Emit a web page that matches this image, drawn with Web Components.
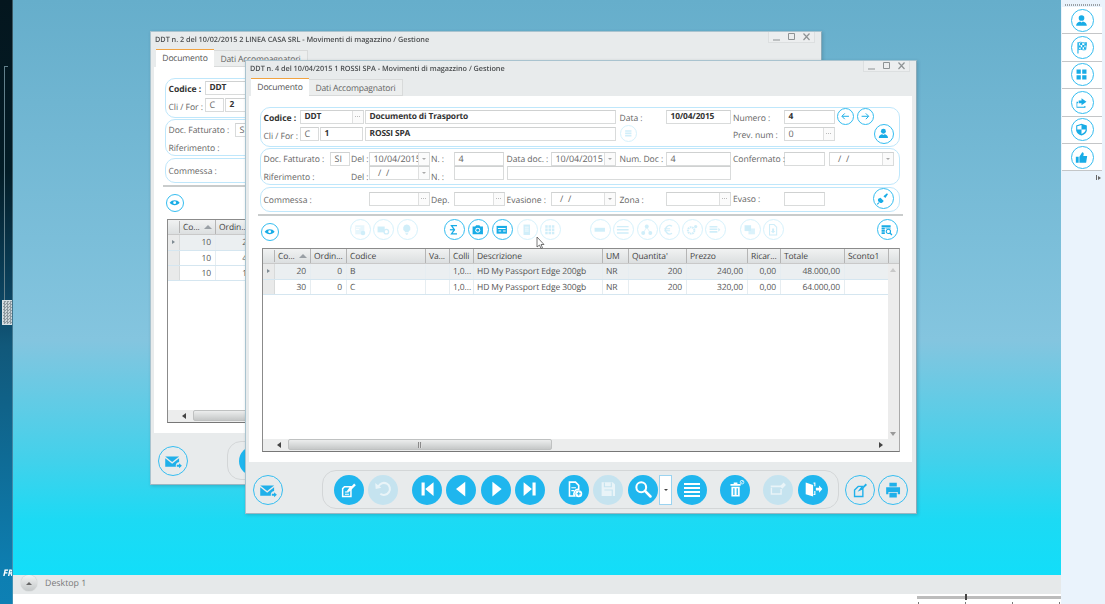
<!DOCTYPE html>
<html lang="it"><head><meta charset="utf-8"><title>DDT</title>
<style>html,body{margin:0;padding:0;height:604px;overflow:hidden;background:#fff}</style></head>
<body><app-desktop></app-desktop>
<script>
const FONT='"Open Sans","Noto Sans",sans-serif';
const P={
first:'<path d="M6 5h3.4v14H6zM19 4.500v15L10 12z"/>',
prev:'<path d="M16.500 4v16L6.500 12z"/>',
next:'<path d="M8 4v16l10-8z"/>',
last:'<path d="M5 4.500v15l9-7.500zM14.600 5H18v14h-3.400z"/>',
list:'<path d="M4 5h16v2H4zM4 9h16v2H4zM4 13h16v2H4zM4 17h16v2H4z"/>',
search:'<circle cx="10" cy="10" r="5.300" fill="none" stroke="currentColor" stroke-width="2.200"/><path d="M14 14l6 6" stroke="currentColor" stroke-width="2.800" stroke-linecap="round"/>',
undo:'<path d="M7 9a6.500 6.500 0 1 1 2 8" fill="none" stroke="currentColor" stroke-width="2.200"/><path d="M3.500 5.500l.5 6.500 6-1.500z"/>',
trash:'<path d="M7 6.500h11V8.500H7zM10.500 5h4v1.500h-4zM8 9.500h9V20H8z"/><path d="M10.700 11v7.500M14.300 11v7.500" stroke="var(--bg,#1fb6ee)" stroke-width="1.300"/><circle cx="19.500" cy="4.500" r="2" fill="none" stroke="currentColor" stroke-width=".8"/><path d="M18.200 5.800l2.600-2.600" stroke="currentColor" stroke-width=".7"/>',
save:'<path d="M5 4.500h12l2.500 2.500v12.500H5z"/><path d="M8 5v4.500h7.500V5M8 13h8.500v6.500" fill="none" stroke="var(--bg,#c5e3ef)" stroke-width="1.200"/>',
edit:'<path d="M7 9.500h7l0 0-3 4 3-1v7.500H5V11.500z" fill="none" stroke="currentColor" stroke-width="1.600"/><path d="M7.500 14.500h4v1.200h-4zM7.500 17h4.500v1.200h-4.500z"/><path d="M11 13l6.500-7 1.800 1.800-6.800 6.800-2.200.6z"/>',
newdoc:'<path d="M7 4.500h6.500l3.500 3.500v4a5 5 0 0 0-4.500 7.500H7z" fill="none" stroke="currentColor" stroke-width="1.700"/><path d="M9 10h5v1.200H9zM9 13h3v1.200H9z"/><circle cx="17" cy="17" r="3.800"/><path d="M15 17h4M17 15v4" stroke="var(--bg,#1fb6ee)" stroke-width="1.200"/>',
win:'<path d="M4 8h12v2H4zM4 10.500h1.500V18H4zM16 12v6H4v-1.500h10.500V12z"/><path d="M14 9l4-4 2.500 2.500-4 4z"/>',
exit:'<path d="M4 5l8 2.500v12.500l-8-2.500zM12.500 5h2v4h-1.200V6.200h-.8zM13.300 14h1.200v4.500h-2v-1.200h.8z"/><path d="M15 10.500h3.500V8l3.500 4-3.500 4v-2.500H15z"/>',
mail:'<path d="M3.500 7h15l-7.500 6zM3.500 8.800l7.500 6 7.500-6V13a4 4 0 0 0-3.500 5H3.500z"/><path d="M16 16h2.500v-1.800l3 2.800-3 2.800V18H16z"/>',
newout:'<path d="M10 8h4.500l-3 4 3.500-1.500V19H6V12z" fill="none" stroke="currentColor" stroke-width="1.500"/><path d="M13 10.500l5-5.500 1.500 1.500-5.500 5z"/>',
print:'<path d="M8 4h8v4H8zM4.500 9h15v7.500H17V14H7v2.500H4.500zM8 15h8v5H8z"/>',
eye:'<path d="M3 12c4-6 14-6 18 0-4 6-14 6-18 0z"/><circle cx="12" cy="12" r="2.600" fill="#fff"/>',
sigma:'<path d="M17 5.500H8.500l4.500 6.500-4.500 6.500H17" fill="none" stroke="currentColor" stroke-width="2"/><path d="M6 12h7.500" stroke="currentColor" stroke-width="2"/>',
camera:'<path d="M4 7h4l1.500-2h5L16 7h4v12H4z"/><circle cx="12" cy="12.700" r="3.800" fill="#fff"/><circle cx="12" cy="12.700" r="2.300"/>',
card:'<path d="M4 6h16v12H4z"/><path d="M6 10h12M7 14h4M14 14h4" stroke="#fff" stroke-width="1.700"/>',
grid9:'<path d="M5 5h3.800v3.800H5zM10.100 5h3.800v3.800h-3.800zM15.200 5H19v3.800h-3.800zM5 10.100h3.800v3.800H5zM10.100 10.100h3.800v3.800h-3.800zM15.200 10.100H19v3.800h-3.800zM5 15.200h3.800V19H5zM10.100 15.200h3.800V19h-3.800zM15.200 15.200H19V19h-3.800z"/>',
doca:'<path d="M5 5h14v14H5z" opacity=".5"/><path d="M6 8h7v1.500H6zM6 11h5v1.500H6z" fill="#fff"/><circle cx="17" cy="17" r="3.500"/>',
docb:'<path d="M4 7h11v9H4z"/><circle cx="17.500" cy="15" r="3.500" fill="none" stroke="currentColor" stroke-width="2"/>',
bulb:'<path d="M12 4a5.500 5.500 0 0 0-3 10.200V16h6v-1.800A5.500 5.500 0 0 0 12 4zM10 17h4v1.300h-4zM10.700 19h2.600v1h-2.600z"/>',
doc3:'<path d="M7 4h10v16H7z"/><path d="M9 8h6M9 11h6M9 14h6" stroke="#fff" stroke-width="1.200"/>',
minus:'<path d="M4 9h16v6H4z"/>',
bars:'<path d="M3 6h18v2H3zM3 11h18v2H3zM3 16h18v2H3z"/>',
tree:'<circle cx="12" cy="7" r="3"/><circle cx="6.500" cy="17" r="3"/><circle cx="17.500" cy="17" r="3"/><path d="M12 8l-5.500 9M12 8l5.500 9" stroke="currentColor"/>',
euro:'<path d="M17 6.500a6.500 6.500 0 1 0 0 11" fill="none" stroke="currentColor" stroke-width="2"/><path d="M5 10.500h9M5 13.500h9" stroke="currentColor" stroke-width="1.500"/>',
gear:'<circle cx="11" cy="13" r="5" fill="none" stroke="currentColor" stroke-width="3" stroke-dasharray="2.500 1"/><circle cx="18" cy="7" r="2.500"/>',
rows:'<path d="M4 6h12v2.500H4zM4 10h12v2.500H4zM4 14h12v2.500H4z"/><path d="M17.500 9l3 3-3 3z"/>',
copy:'<path d="M4 5h10v9H4z"/><path d="M10 10h10v9H10z" opacity=".75"/>',
docdn:'<path d="M7 4h7l4 4v12H7z" fill="none" stroke="currentColor" stroke-width="1.600"/><path d="M11 10h3v4h2l-3.500 3.500L9 14h2z"/>',
dbsearch:'<path d="M4 5h14v3H4zM4 9h5v2.500H4zM4 12.500h5V15H4zM4 16h5v2.500H4zM10 9h8v1H10z"/><circle cx="14.500" cy="14.500" r="3.300" fill="none" stroke="currentColor" stroke-width="1.700"/><path d="M17 17l3 3" stroke="currentColor" stroke-width="2"/>',
left:'<path d="M19 12H6M11 6.500L5.500 12l5.500 5.500" fill="none" stroke="currentColor" stroke-width="1.900"/>',
right:'<path d="M5 12h13M13 6.500l5.500 5.500-5.500 5.500" fill="none" stroke="currentColor" stroke-width="1.900"/>',
user:'<circle cx="12" cy="8.500" r="4"/><path d="M4.500 19.500c0-4 3.500-5.500 5.500-6l2 1.200 2-1.200c2 .5 5.500 2 5.500 6z"/>',
plug:'<path d="M13 8l3 3 4-6-1.500-1.500zM8.500 10.500l5 5-2.500 2.500c-2 1-3.500.5-5-1s-2-3-1-5z"/><path d="M6 18l-2.500 2.500" stroke="currentColor" stroke-width="1.600"/>',
flag:'<path d="M7 4.500v16" stroke="currentColor" stroke-width="1.500"/><path d="M8 5c4-1.500 6 1.500 11 0l-1 10c-4 1.500-6-1.500-10 0z" fill="none" stroke="currentColor" stroke-width="1.200"/><path d="M10 5.500h3v3h-3zM16 6h3v3h-3zM13 8.500h3v3h-3zM8.500 9h2.500v3H8.500zM11 11.500h2.500v3H11zM15.500 11.500h2.500v3h-2.500z"/>',
tiles:'<path d="M5 5h6v6H5zM13 5h6v6h-6zM5 13h6v6H5zM13 13h6v6h-6z"/>',
share:'<path d="M12 6l7 5-7 5v-3H8V9h4z"/><path d="M5 11h2v2H6v5h10v-1h1.500v2.500H5z"/>',
shield:'<path d="M12 4l7.500 2.500V13c0 3.500-3.500 6-7.500 7.500C8 19 4.500 16.500 4.500 13V6.500z"/><path d="M12 5.500V12H6V7.500zM12 12h6c-.3 3-3 5-6 6.500z" fill="#fff"/>',
thumb:'<path d="M4 11h4v8.500H4zM9 11l4-6.500c1.800 0 2.500 1.500 2 3.500l-.5 2H20l-1.500 9.500H9z"/>',
stack:'<path d="M6 6h12v3H6zM6 10.500h12v3H6zM6 15h12v3H6z"/>'
};
class XIco extends HTMLElement{connectedCallback(){
 const d=+this.getAttribute('d')||21,n=this.getAttribute('n');
 const s=this.getAttribute('s')||.74;
 const r=this.attachShadow({mode:'open'});
 r.innerHTML=`<style>
 :host{display:inline-flex;flex:none;align-items:center;justify-content:center;box-sizing:border-box;width:${d}px;height:${d}px;border-radius:50%}
 :host([v=out]){border:1.500px solid #35bdf0;color:#18ace6;background:#fff}
 :host([v=ghost]){border:1.500px solid #35bdf0;color:#18ace6;background:#fff;opacity:.2}
 :host([v=clear]){border:1.300px solid #35bdf0;color:#1fb0ea;background:transparent}
 :host([v=fill]){background:#1fb6ee;color:#fff;--bg:#1fb6ee}
 :host([v=off]){background:#c5e3ef;color:#e9f4f8;--bg:#c5e3ef}
 svg{width:${d*s}px;height:${d*s}px;display:block;fill:currentColor}
 </style><svg viewBox="0 0 24 24">${P[n]||''}</svg>`;
}}
customElements.define('x-ico',XIco);

class XField extends HTMLElement{connectedCallback(){
 const b=this.getAttribute('btn');
 this.attachShadow({mode:'open'}).innerHTML=`<style>
 :host{display:inline-flex;flex:none;box-sizing:border-box;height:100%;border:1px solid #d9dbdb;border-top-color:#cfd1d1;background:#fff;color:#666;font-size:9px;line-height:12px;overflow:hidden}
 :host([b]){color:#333;font-weight:700;font-size:8.400px;letter-spacing:-.15px}
 .t{flex:1;padding:1px 0 0 4px;white-space:nowrap;overflow:hidden;align-self:center}
 .btn{flex:none;width:10px;border-left:1px solid #dfe0e0;display:flex;align-items:center;justify-content:center;color:#aaa;font-size:7px;background:#fbfbfb}
 i{display:block;width:0;height:0;border:2px solid transparent;border-top:2.500px solid #aaa;border-bottom:0}
 </style><span class="t"><slot></slot></span>${b?`<span class="btn">${b=='drop'?'<i></i>':'<svg width="6" height="2" viewBox="0 0 6 2" fill="#bbb"><path d="M0 0h1v1H0zM2 0h1v1H2zM4 0h1v1H4z"/></svg>'}</span>`:''}`;
}}
customElements.define('x-field',XField);

class XGroup extends HTMLElement{connectedCallback(){
 this.attachShadow({mode:'open'}).innerHTML=`<style>
 :host{display:flex;flex-direction:column;box-sizing:border-box;border:1.500px solid #bfe7fb;border-radius:10px;background:#fff;margin-left:11px;width:640px}
 </style><slot></slot>`;
}}
customElements.define('x-group',XGroup);

class XRow extends HTMLElement{connectedCallback(){
 this.attachShadow({mode:'open'}).innerHTML=`<style>
 :host{display:flex;align-items:center;flex:none;color:#666;font-size:8.600px;letter-spacing:-.05px}
 </style><slot></slot>`;
}}
customElements.define('x-row',XRow);

/* builds a flowing row from x positions: each item's margin comes from the previous item's end.
   limit: items starting at or past it are covered by another window, so they carry no text. */
function row(h,top,items,limit=1e9,org=261.5){
 let cur=org,html='';
 for(const it of items){
  const [k,x,w,t,o]=it; const m=(x-cur).toFixed(1); cur=x+w;
  const txt=x>=limit&&k!='i'?'':t;
  if(k=='l') html+=`<span style="margin-left:${m}px;width:${w}px;flex:none;white-space:nowrap;position:relative;top:${((o&&o.dy)||0)+.5}px;${o&&o.b?'font-weight:700;color:#333':''}">${txt}</span>`;
  else if(k=='f'){const a=o||{};html+=`<x-field style="margin-left:${m}px;width:${w}px" ${a.b?'b':''} ${a.btn?`btn="${a.btn}"`:''}>${txt||''}</x-field>`;}
  else if(k=='i'){html+=`<x-ico style="margin-left:${m}px" n="${txt}" d="${w}" v="${(o&&o.v)||'out'}"></x-ico>`;}
 }
 return `<x-row style="height:${h}px;margin-top:${top}px">${html}</x-row>`;
}

class IconBar extends HTMLElement{connectedCallback(){
 const items=JSON.parse(this.getAttribute('items'));const org=+this.getAttribute('org');
 let cur=org,h='';
 for(const [c,d,n,v,s,dy] of items){h+=`<x-ico style="margin-left:${(c-d/2-cur).toFixed(1)}px;${dy?`margin-top:${dy}px`:''}" n="${n}" d="${d}" v="${v}" ${s?`s="${s}"`:''}></x-ico>`;cur=c+d/2;}
 this.attachShadow({mode:'open'}).innerHTML=`<style>:host{display:flex;align-items:center;flex:none}</style>${h}`;
}}
customElements.define('icon-bar',IconBar);

class DocGrid extends HTMLElement{connectedCallback(){
 const rows=JSON.parse(this.getAttribute('rows'));
 const vis=+this.getAttribute('vis')||12;
 const W=[36,36,79,24,24,129,26,58,61,33,64,44];
 const H=['Co...','Ordin...','Codice','Va...','Colli','Descrizione','UM',"Quantita'",'Prezzo','Ricar...','Totale','Sconto1'];
 const A=[1,1,0,0,0,0,0,1,1,1,1,0];
 const head=H.map((t,i)=>`<div class="hc" style="width:${W[i]}px">${i<vis?t:''}${i==0?'<b class="sort"></b>':''}</div>`).join('');
 const body=rows.map((r,ri)=>`<div class="r ${ri==0?'sel':''}" style="height:${ri==0?16:15}px"><div class="rs">${ri==0?'<b class="tri"></b>':''}</div>${W.map((w,i)=>`<div class="c ${A[i]?'ra':''}" style="width:${w}px">${r[i]||''}</div>`).join('')}</div>`).join('');
 this.attachShadow({mode:'open'}).innerHTML=`<style>
 :host{display:flex;flex-direction:column;box-sizing:border-box;flex:none;margin:5px 0 0 13px;width:638px;height:204px;border:1px solid #8b8b8b;border-bottom-color:#777;border-right-color:#aaa;background:#fff;font-size:8.500px;letter-spacing:-.1px;color:#555}
 .h{display:flex;height:15px;box-sizing:border-box;flex:none;background:linear-gradient(#f1f2f2,#dcdfe0);border-bottom:1px solid #c9c9c9}
 .hs{width:11px;flex:none;border-right:1px solid #b5b5b5;margin:1px 0}
 .hc{flex:none;box-sizing:border-box;padding:0 3px;line-height:15px;white-space:nowrap;color:#444;border-right:1px solid #b5b5b5;position:relative}
 .sort{position:absolute;right:3px;top:5px;border:4px solid transparent;border-bottom:4px solid #9aa0a5;border-top:0}
 .mid{flex:1;display:grid;grid-template-columns:1fr 11px;grid-template-rows:1fr 12px;min-height:0}
 .v{background:#ececec;position:relative}
 .vw{display:flex;flex-direction:column;min-width:0;overflow:hidden}
 .r{display:flex;flex:none;border-bottom:1px solid #d5e6f0;box-sizing:border-box;background:#fff}
 .r.sel .c{background:#ebeff1}
 .rs{width:11px;flex:none;background:#e9eaea;border-right:1px solid #d8dada;display:flex;align-items:center;justify-content:center}
 .tri{border:2.500px solid transparent;border-left:3px solid #7f8b93;border-right:0}
 .c{flex:none;box-sizing:border-box;padding:1px 3px 0;line-height:14px;white-space:nowrap;overflow:hidden;border-right:1px solid #e6edf1}
 .ra{text-align:right;padding-right:4px}
 .arrv{display:block;position:absolute;left:2px;border:3.500px solid transparent}
 .hb{grid-column:1/3;display:flex;align-items:center;background:#eceded;position:relative}
 .ar{flex:none;border:3.500px solid transparent}
 .th{flex:none;height:11px;width:264px;margin-left:7px;background:linear-gradient(#eceded,#d9dbdb 50%,#c6c8c8);border:1px solid #bfc1c1;border-radius:2px;box-sizing:border-box;display:flex;justify-content:center;align-items:center}
 .th span{width:4px;height:6px;background:repeating-linear-gradient(90deg,#8a8a8a 0 1px,#ddd 1px 2px)}
 </style>
 <div class="h"><div class="hs"></div>${head}</div>
 <div class="mid"><div class="vw">${body}</div>
 <div class="v"><b class="arrv" style="top:4px;border-bottom:4px solid #c8c8c8;border-top:0"></b><b class="arrv" style="bottom:3px;border-top:4px solid #999;border-bottom:0"></b></div>
 <div class="hb"><b class="ar" style="margin-left:14px;border-right:4px solid #444;border-left:0"></b><div class="th"><span></span></div><b class="ar" style="margin-left:327px;border-left:4px solid #444;border-right:0"></b></div></div>`;
}}
customElements.define('doc-grid',DocGrid);

class DocWindow extends HTMLElement{connectedCallback(){
 const g=n=>this.getAttribute(n)||'';
 const L=+this.getAttribute('limit')||1e9;
 const fill='fill',ghost='ghost',out='out',clear='clear',off='off';
 const dt='&nbsp;&nbsp;/ &nbsp;/';
 const g1=row(14,1.5,[['l',264,36,'Codice :',{b:1,dy:.5}],['f',300,64,'DDT',{b:1,btn:'dots'}],['f',365,251,'Documento di Trasporto',{b:1}],['l',620,46,'Data :',{dy:.5}],['f',666,65,g('data'),{b:1}],['l',733.5,50.5,'Numero :',{dy:.5}],['f',784,51,g('num'),{b:1}],['i',837,17,'left',{v:out}],['i',857,17,'right',{v:out}]],L)
  +row(14,3,[['l',264,36,'Cli / For :',{dy:1.5}],['f',300,19,'C'],['f',320,43,g('cli'),{b:1}],['f',365,251,g('ragione'),{b:1}],['i',620,17,'stack',{v:ghost}],['l',733.5,50.5,'Prev. num :',{dy:.5}],['f',784,51,'0',{btn:'dots'}],['i',874,20,'user',{v:out}]],L);
 const g2=row(14,2.5,[['l',264,66,'Doc. Fatturato :'],['f',330,20,'SI'],['l',351.5,18,'Del :'],['f',369,61,g('data'),{btn:'drop'}],['l',431.5,22,'N. :'],['f',454,50,g('num')],['l',507,44,'Data doc. :'],['f',551,65,g('data'),{btn:'drop'}],['l',620,46,'Num. Doc :'],['f',666,65,g('num')],['l',733.5,50,'Confermato :'],['f',784,41,''],['f',829,65,dt,{btn:'drop'}]],L)
  +row(14.5,0,[['l',264,87,'Riferimento :',{dy:3.5}],['l',351.5,18,'Del :',{dy:3.5}],['f',369,61,dt,{btn:'drop'}],['l',431.5,22,'N. :',{dy:3.5}],['f',454,50,''],['f',507,224,'']],L);
 const g3=row(14,3.5,[['l',264,105,'Commessa :',{dy:1}],['f',369,61,'',{btn:'dots'}],['l',431.5,22,'Dep.',{dy:1}],['f',454,51,'',{btn:'dots'}],['l',507,44,'Evasione :',{dy:1}],['f',551,65,dt,{btn:'drop'}],['l',620,46,'Zona :',{dy:1}],['f',666,65,'',{btn:'dots'}],['l',733.5,50.5,'Evaso :'],['f',784,41,''],['i',873,21,'plug',{v:out}]],L);
 const tb=[[270,18,'eye',out,0,4],[360,21,'doca',ghost],[383,21,'docb',ghost],[407,21,'bulb',ghost],[454,21,'sigma',out],[478,21,'camera',out],[502,21,'card',out],[527,21,'doc3',ghost],[550,21,'grid9',ghost],[600,21,'minus',ghost],[623,21,'bars',ghost],[647,21,'tree',ghost],[669,21,'euro',ghost],[692,21,'gear',ghost],[715,21,'rows',ghost],[750,21,'copy',ghost],[773,21,'docdn',ghost],[887,21,'dbsearch',out]];
 const pill1=[[349,30,'edit',fill],[383,30,'undo',off],[427,30,'first',fill],[461,30,'prev',fill],[496,30,'next',fill],[530,30,'last',fill],[574,30,'newdoc',fill],[608,30,'save',off],[643,30,'search',fill]];
 const pill2=[[692,30,'list',fill,.8],[735,30,'trash',fill],[778,30,'win',off],[813,30,'exit',fill]];
 const q=a=>JSON.stringify(a).replace(/"/g,'&quot;').replace(/'/g,'&#39;');
 this.attachShadow({mode:'open'}).innerHTML=`<style>
 :host{display:flex;flex-direction:column;position:absolute;box-sizing:border-box;width:672px;height:454px;background:#e8ebec;border:1px solid #a9c3cf;border-right:1.500px solid #8aaab8;border-bottom:1.500px solid #9cb6c2;box-shadow:1px 1px 3px rgba(40,70,90,.25);font-family:${FONT}}
 .title{display:flex;align-items:flex-start;height:17px;flex:none}
 .title span{flex:1;margin:3px 0 0 4px;font-size:7.300px;line-height:11px;font-weight:600;letter-spacing:-.03px;color:#4a4d4f;white-space:nowrap}
 .wb{display:flex;margin-right:6px;border:1px solid #dcdfe0;border-top:0;height:10px;background:#eceeef}
 .wb svg{display:block;width:15px;height:10px;fill:none;stroke:#8d9294;stroke-width:1}
 .tabs{display:flex;align-items:flex-start;height:18px;flex:none;padding-left:5px}
 .tab{box-sizing:border-box;flex:none;font-size:8.600px;letter-spacing:-.2px;color:#555;text-align:center;white-space:nowrap}
 .on{width:58px;height:18px;background:#fff;border-top:1.500px solid #f1a341;line-height:17px}
 .offt{width:94px;height:17px;margin-top:1px;background:#eceeee;border:1px solid #d8dada;border-left:0;line-height:16px;color:#666}
 .panel{flex:none;height:366px;margin:0 4px 0 3px;background:#fff;padding-top:11px;box-sizing:border-box;display:flex;flex-direction:column}
 .sep{height:1.500px;background:#c9cccc;margin:2px 0 0 9px;width:645px;flex:none}
 .tools{margin:1px 0 0 0;height:26px}
 .foot{display:flex;align-items:flex-start;flex:1;min-height:0;padding-top:8px}
 .pill{display:flex;align-items:center;box-sizing:border-box;height:39px;width:517px;margin-left:39px;border:1px solid #d3d6d7;border-radius:14px;flex:none}
 .dd{flex:none;box-sizing:border-box;width:13px;height:30px;margin-left:1px;background:#fff;border:1px solid #9bd3f0;display:flex;align-items:center;justify-content:center}
 .dd i{border:2px solid transparent;border-top:2.500px solid #444;border-bottom:0}
 x-group{flex:none}
 </style>
 <div class="title"><span>${g('wt')}</span><div class="wb">
 <svg viewBox="0 0 15 10"><path d="M4 8h7"/></svg><svg viewBox="0 0 15 10"><path d="M4.500 1.500h6v6h-6z"/></svg><svg viewBox="0 0 15 10"><path d="M4.500 1.500l6 6.500M10.500 1.500l-6 6.500" stroke-width="1.200"/></svg></div></div>
 <div class="tabs"><div class="tab on">Documento</div><div class="tab offt">Dati Accompagnatori</div></div>
 <div class="panel">
 <x-group style="height:40px">${g1}</x-group>
 <x-group style="height:37px;margin-top:1px">${g2}</x-group>
 <x-group style="height:25px;margin-top:2px">${g3}</x-group>
 <div class="sep"></div>
 <icon-bar class="tools" org="249" items="${q(tb)}"></icon-bar>
 <doc-grid vis="${g('vis')||12}" rows="${q(JSON.parse(g('rows')))}"></doc-grid>
 </div>
 <div class="foot">
 <x-ico n="mail" d="30" v="clear" style="margin:5px 0 0 7px"></x-ico>
 <div class="pill"><icon-bar org="323" items="${q(pill1)}"></icon-bar><div class="dd"><i></i></div><icon-bar org="672" items="${q(pill2)}"></icon-bar></div>
 <x-ico n="newout" d="30" v="clear" style="margin:5px 0 0 6px"></x-ico>
 <x-ico n="print" d="30" v="clear" style="margin:5px 0 0 3px"></x-ico>
 </div>`;
}}
customElements.define('doc-window',DocWindow);

class SidePanel extends HTMLElement{connectedCallback(){
 const ic=['user','flag','tiles','share','shield','thumb'];
 this.attachShadow({mode:'open'}).innerHTML=`<style>
 :host{display:flex;flex-direction:column;background:#eaf3fc;box-sizing:border-box;padding:4px 3px 0 1px;align-items:stretch}
 .hd{height:2px;margin:0 1px 1px 3px;background:repeating-linear-gradient(90deg,#9aa0a5 0 1px,transparent 1px 2px)}
 .c{height:27.400px;box-sizing:border-box;background:#fff;border-bottom:1.500px solid #c4c6c8;display:flex;align-items:center;justify-content:center}
 .tail{display:flex;justify-content:flex-end;align-items:center;margin-top:4px;height:5px;gap:1px;padding-right:1px}
 .tail b{display:block;border:2.500px solid transparent;border-left:3px solid #666;border-right:0}
 .tail u{display:block;width:1px;height:5px;background:#666}
 </style><div class="hd"></div>${ic.map(n=>`<div class="c"><x-ico n="${n}" d="23" v="out"></x-ico></div>`).join('')}<div class="tail"><u></u><b></b></div>`;
}}
customElements.define('side-panel',SidePanel);

class LeftStrip extends HTMLElement{connectedCallback(){
 this.attachShadow({mode:'open'}).innerHTML=`<style>
 :host{display:block;position:relative;overflow:hidden;background:linear-gradient(#04161e,#031c26 170px,#0c4562 300px,#11587a 345px,#0d7fb2 575px,#0e80b4);border-right:1px solid rgba(130,170,185,.45);box-sizing:border-box}
 .line{position:absolute;left:4px;top:66px;width:4px;height:240px;border-left:1px solid #62808b;border-top:1px solid #62808b;box-sizing:border-box}
 .chk{position:absolute;left:2px;top:300px;width:11px;height:25px;box-sizing:border-box;border:1px solid #d9e2e6;background:repeating-conic-gradient(#8e9aa0 0 25%,#cdd5d9 0 50%) 0 0/3px 3px}
 .fr{position:absolute;left:3px;top:567px;color:#fff;font:italic 700 9px/11px ${FONT}}
 </style><div class="line"></div><div class="chk"></div><div class="fr">FR</div>`;
}}
customElements.define('left-strip',LeftStrip);

class TaskBar extends HTMLElement{connectedCallback(){
 this.attachShadow({mode:'open'}).innerHTML=`<style>
 :host{display:flex;flex:none;align-items:center;box-sizing:border-box;height:19px;padding-bottom:3px;background:#e6e9ea;font-family:${FONT};font-size:8.800px;color:#777}
 .b{width:16px;height:16px;border-radius:50%;margin:0 8px 0 8px;background:linear-gradient(#f2f3f3,#c4c8c9);display:flex;align-items:center;justify-content:center;box-shadow:0 0 1px #999}
 .b i{border:3px solid transparent;border-bottom:3px solid #666;border-top:0}
 </style><div class="b"><i></i></div><span>Desktop 1</span>`;
}}
customElements.define('task-bar',TaskBar);

class ZoomBar extends HTMLElement{connectedCallback(){
 this.attachShadow({mode:'open'}).innerHTML=`<style>
 :host{display:block;flex:1;background:#fff;position:relative}
 .tr{position:absolute;right:0;top:2px;width:144px;height:3px;background:#bcbcbc}
 .th{position:absolute;left:952px;top:0;width:2px;height:6px;background:#444}
 .tk{position:absolute;top:8px;width:1px;height:2px;background:#777}
 </style><div class="tr"></div><div class="th"></div>${[905,952,999,1046].map(x=>`<div class="tk" style="left:${x}px"></div>`).join('')}`;
}}
customElements.define('zoom-bar',ZoomBar);

class AppDesktop extends HTMLElement{connectedCallback(){
 const r1=[['20','0','B','','1,0...','HD My Passport Edge 200gb','NR','200','240,00','0,00','48.000,00',''],['30','0','C','','1,0...','HD My Passport Edge 300gb','NR','200','320,00','0,00','64.000,00','']];
 const r2=[['10','2'],['10','4'],['10','1']];
 const esc=a=>JSON.stringify(a).replace(/"/g,'&quot;').replace(/'/g,'&#39;');
 this.attachShadow({mode:'open'}).innerHTML=`<style>
 :host{display:grid;grid-template-columns:13px 1048px 44px;width:1105px;height:604px;overflow:hidden;filter:blur(.35px);font-family:${FONT};text-rendering:geometricPrecision}
 .mid{display:flex;flex-direction:column;min-width:0}
 .canvas{flex:none;height:575px;position:relative;background:linear-gradient(#66aecb,#84c5df 340px,#42d1eb 460px,#1cdaf4 520px,#12def9)}
 doc-window.a{left:137px;top:31px}
 doc-window.b{left:232px;top:60px}
 .cur{position:absolute;left:523px;top:236px;width:10px;height:14px}
 </style>
 <left-strip></left-strip>
 <div class="mid"><div class="canvas">
 <doc-window class="a" limit="340" vis="2" wt="DDT n. 2 del 10/02/2015 2 LINEA CASA SRL - Movimenti di magazzino / Gestione" data="10/02/2015" num="2" cli="2" ragione="LINEA CASA SRL" rows="${esc(r2)}"></doc-window>
 <doc-window class="b" wt="DDT n. 4 del 10/04/2015 1 ROSSI SPA - Movimenti di magazzino / Gestione" data="10/04/2015" num="4" cli="1" ragione="ROSSI SPA" rows="${esc(r1)}"></doc-window>
 <svg class="cur" viewBox="0 0 10 14"><path d="M1 1v10l2.500-2 1.500 3.500 1.500-.7L5 8.500h3z" fill="#fff" stroke="#555" stroke-width=".8"/></svg>
 </div><task-bar></task-bar><zoom-bar></zoom-bar></div>
 <side-panel></side-panel>`;
}}
customElements.define('app-desktop',AppDesktop);
</script></body></html>
